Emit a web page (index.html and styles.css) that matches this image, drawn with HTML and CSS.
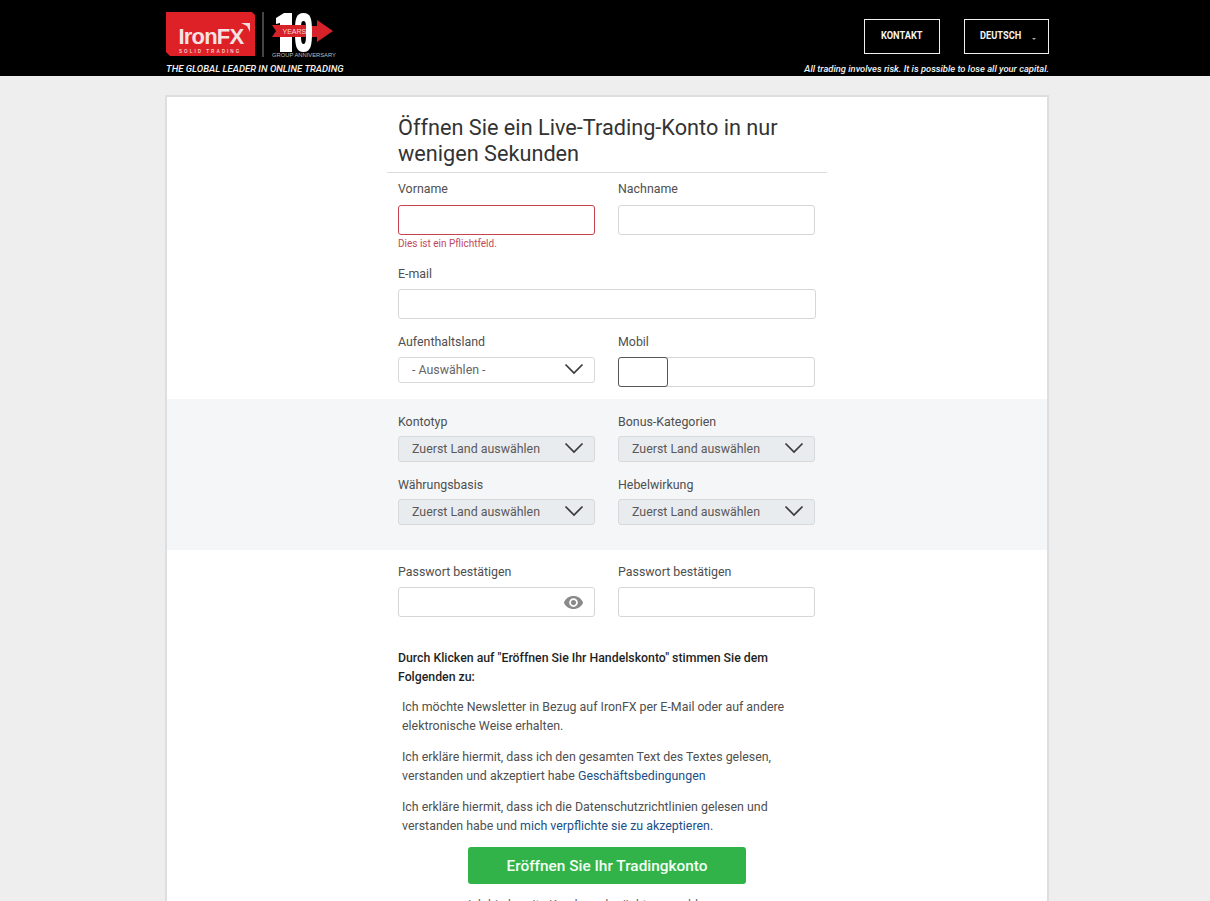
FILE: index.html
```html
<!DOCTYPE html>
<html lang="de">
<head>
<meta charset="utf-8">
<title>IronFX</title>
<link rel="stylesheet" href="styles.css">
</head>
<body>
<div class="page">
<header class="topbar">
  <div class="topbar-inner">
    <div class="brand">
      <svg class="logo" width="170" height="50" viewBox="0 0 170 50" aria-label="IronFX 10 Years">
        <path d="M0 0H86L89 3V44H4L0 40Z" fill="#de2027"/>
        <text x="12.500" y="32" class="logo-word">IronFX</text>
        <path d="M84 20V11H75L81 14Z" fill="#f6dddd"/>
        <text x="13" y="40.500" class="logo-sub">SOLID TRADING</text>
        <rect x="96.500" y="0" width="1" height="45" fill="#8a8a8a"/>
        <path d="M144 14H151V8L167 19L151 30V25H144Z" fill="#d8222a"/>
        <path d="M137.500 1C130 1 129 7 129 20C129 33 130 40 137.500 40C145 40 146 33 146 20C146 7 145 1 137.500 1ZM137.500 9C140 9 140 12 140 20C140 28 140 32 137.500 32C135 32 135 28 135 20C135 12 135 9 137.500 9Z" fill="#fff"/>
        <path d="M110 6L118 1H126V40H114V11L110 12Z" fill="#fff"/>
        <path d="M106 13H140V25H106L110 19Z" fill="#d8222a"/>
        <text x="116.500" y="22" class="logo-years">YEARS</text>
        <text x="106" y="44.500" class="logo-group">GROUP ANNIVERSARY</text>
      </svg>
      <p class="tagline">THE GLOBAL LEADER IN ONLINE TRADING</p>
    </div>
    <div class="top-right">
      <div class="top-buttons">
        <a class="top-btn top-btn-contact"><span class="top-btn-text">KONTAKT</span></a>
        <a class="top-btn top-btn-lang"><span class="top-btn-text">DEUTSCH</span><span class="caret"></span></a>
      </div>
      <p class="risk">All trading involves risk. It is possible to lose all your capital.</p>
    </div>
  </div>
</header>

<main class="card">
  <section class="form-col">
    <h1 class="title">Öffnen Sie ein Live-Trading-Konto in nur wenigen Sekunden</h1>
    <div class="rows rows-first">
      <div class="grid-2 row-name">
        <div class="field">
          <label class="label label-wide">Vorname</label>
          <div class="input input-error"></div>
          <p class="error">Dies ist ein Pflichtfeld.</p>
        </div>
        <div class="field">
          <label class="label label-wide">Nachname</label>
          <div class="input"></div>
        </div>
      </div>
      <div class="field row-mail">
        <label class="label">E-mail</label>
        <div class="input"></div>
      </div>
      <div class="grid-2 row-country">
        <div class="field">
          <label class="label">Aufenthaltsland</label>
          <div class="select"><span>- Auswählen -</span><svg class="chev" viewBox="0 0 20 12"><path d="M1.5 1.5L10 10L18.500 1.500"/></svg></div>
        </div>
        <div class="field">
          <label class="label">Mobil</label>
          <div class="input phone"><div class="phone-code"></div></div>
        </div>
      </div>
    </div>
  </section>

  <section class="band">
    <div class="form-col band-col">
      <div class="grid-2">
        <div class="field">
          <label class="label">Kontotyp</label>
          <div class="select select-off"><span>Zuerst Land auswählen</span><svg class="chev" viewBox="0 0 20 12"><path d="M1.5 1.5L10 10L18.500 1.500"/></svg></div>
        </div>
        <div class="field">
          <label class="label">Bonus-Kategorien</label>
          <div class="select select-off"><span>Zuerst Land auswählen</span><svg class="chev" viewBox="0 0 20 12"><path d="M1.5 1.5L10 10L18.500 1.500"/></svg></div>
        </div>
        <div class="field">
          <label class="label">Währungsbasis</label>
          <div class="select select-off"><span>Zuerst Land auswählen</span><svg class="chev" viewBox="0 0 20 12"><path d="M1.5 1.5L10 10L18.500 1.500"/></svg></div>
        </div>
        <div class="field">
          <label class="label">Hebelwirkung</label>
          <div class="select select-off"><span>Zuerst Land auswählen</span><svg class="chev" viewBox="0 0 20 12"><path d="M1.5 1.5L10 10L18.500 1.500"/></svg></div>
        </div>
      </div>
    </div>
  </section>

  <section class="form-col lower">
    <div class="grid-2">
      <div class="field">
        <label class="label">Passwort bestätigen</label>
        <div class="input input-pass">
          <svg class="eye" viewBox="0 0 24 24"><path d="M12 4.500C7 4.500 2.700 7.600 1 12C2.700 16.400 7 19.500 12 19.500C17 19.500 21.300 16.400 23 12C21.300 7.600 17 4.500 12 4.500ZM12 17C9.200 17 7 14.800 7 12C7 9.200 9.200 7 12 7C14.800 7 17 9.200 17 12C17 14.800 14.800 17 12 17ZM12 9C10.300 9 9 10.300 9 12C9 13.700 10.300 15 12 15C13.700 15 15 13.700 15 12C15 10.300 13.700 9 12 9Z"/></svg>
        </div>
      </div>
      <div class="field">
        <label class="label">Passwort bestätigen</label>
        <div class="input"></div>
      </div>
    </div>
    <p class="agree-head">Durch Klicken auf "Eröffnen Sie Ihr Handelskonto" stimmen Sie dem Folgenden zu:</p>
    <div class="agree-list">
      <p>Ich möchte Newsletter in Bezug auf IronFX per E-Mail oder auf andere elektronische Weise erhalten.</p>
      <p>Ich erkläre hiermit, dass ich den gesamten Text des Textes gelesen, verstanden und akzeptiert habe <a class="link">Geschäftsbedingungen</a></p>
      <p>Ich erkläre hiermit, dass ich die Datenschutzrichtlinien gelesen und verstanden habe und <a class="link">mich verpflichte sie zu akzeptieren.</a></p>
    </div>
    <button class="submit" type="button">Eröffnen Sie Ihr Tradingkonto</button>
    <p class="foot">Ich bin bereits Kunde und möchte anmelden</p>
  </section>
</main>
</div>
</body>
</html>
```

FILE: styles.css
```css
* { box-sizing: border-box; }
html, body { margin: 0; padding: 0; }
body { background: #eeeeee; font-family: Roboto, "Liberation Sans", sans-serif; color: #4a4a4a; }
p, h1 { margin: 0; }

.page { height: 901px; overflow: hidden; }

.topbar { background: #000; height: 76px; }
.topbar-inner { width: 883px; margin-left: 166px; display: flex; justify-content: space-between; }
.brand { padding-top: 12px; }
.logo { display: block; }
.logo-word { font: 700 22px "Liberation Sans", sans-serif; fill: #f6e2e2; letter-spacing: -0.800px; }
.logo-sub { font: 700 4.600px "Liberation Sans", sans-serif; fill: #f5c9c9; letter-spacing: 2px; }
.logo-years { font: 400 7px "Liberation Sans", sans-serif; fill: #f7d5d5; }
.logo-group { font: 400 5.800px "Liberation Sans", sans-serif; fill: #bdbdbd; }
.tagline { margin-top: 1px; font: italic 500 9.550px/12px Roboto, sans-serif; color: #f2f2f2; white-space: nowrap; }

.top-right { display: flex; flex-direction: column; align-items: flex-end; padding-top: 19px; }
.top-buttons { display: flex; gap: 24px; }
.top-btn { height: 35px; border: 1px solid #f0f0f0; color: #f2f2f2; font: 700 11px/32px Roboto, sans-serif; display: block; text-align: center; }
.top-btn-text { display: inline-block; transform: scaleX(.84); }
.top-btn-contact { width: 76px; }
.top-btn-lang { width: 85px; text-align: left; padding-left: 15px; position: relative; }
.top-btn-lang .top-btn-text { transform-origin: left center; }
.caret { position: absolute; left: 67px; top: 18px; border: 2.500px solid transparent; border-top-color: #aaa; }
.risk { margin-top: 9px; font: italic 500 9.400px/12px Roboto, sans-serif; color: #f2f2f2; white-space: nowrap; }

.card { width: 884px; margin: 19px 0 0 165px; background: #fff; border: 2px solid #dedede; border-bottom: 0; height: 900px; }

.form-col { width: 440px; margin-left: 220px; padding: 0 11px; }
.title { margin: 0 -11px; padding: 18px 11px 5px; font: 400 21.700px/26px Roboto, sans-serif; color: #333; border-bottom: 1px solid #dcdcdc; }

.grid-2 { display: grid; grid-template-columns: 197px 197px; column-gap: 23px; }
.rows-first { padding-top: 8px; padding-bottom: 12px; }
.row-name { height: 85px; }
.row-mail { height: 68px; }
.field { min-width: 0; }
.label { display: block; font-size: 12.400px; line-height: 15px; color: #4f4f4f; margin-bottom: 8px; }
.label-wide { margin-bottom: 9px; }
.input { height: 30px; background: #fff; border: 1px solid #d6d6d6; border-radius: 3px; }
.input-error { border-color: #c8414f; }
.error { margin-top: 3px; font-size: 10px; line-height: 12px; color: #c2485a; }
.phone { padding: 0; }
.phone-code { width: 50px; height: 30px; margin: -1px 0 0 -1px; border: 1px solid #555; border-radius: 3px; background: #fff; }
.input-pass { display: flex; align-items: center; justify-content: flex-end; padding-right: 10px; }
.eye { width: 21px; height: 21px; fill: #8a8a8a; }

.select { height: 26px; background: #fff; border: 1px solid #d9d9d9; border-radius: 3px; display: flex; align-items: center; justify-content: space-between; padding: 0 10px 2px 13px; font-size: 12.400px; color: #666; }
.select-off { background: #e9ecef; color: #5a5a5a; }
.chev { width: 20px; height: 12px; fill: none; stroke: #3a3a3a; stroke-width: 1.700; }

.band { background: #f4f6f8; height: 151px; }
.band-col { padding-top: 15px; }
.band-col .grid-2 { row-gap: 15px; }
.band-col .label { margin-bottom: 7px; }

.lower { padding-top: 14px; }
.agree-head { margin-top: 32px; font-size: 12.300px; line-height: 19px; font-weight: 500; color: #1f1f1f; }
.agree-list { padding: 10px 0 0 4px; font-size: 12.400px; line-height: 19px; color: #4f4f4f; }
.agree-list p { margin-bottom: 12px; }
.link { color: #204f86; }
.submit { display: block; width: 278px; height: 37px; margin: 0 0 0 70px; border: 0; border-radius: 3px; background: #31b34a; color: #f4fff4; font: 500 15.400px Roboto, sans-serif; }
.foot { margin-top: 11px; padding-left: 70px; font-size: 12.500px; line-height: 19px; color: #666; }
```
